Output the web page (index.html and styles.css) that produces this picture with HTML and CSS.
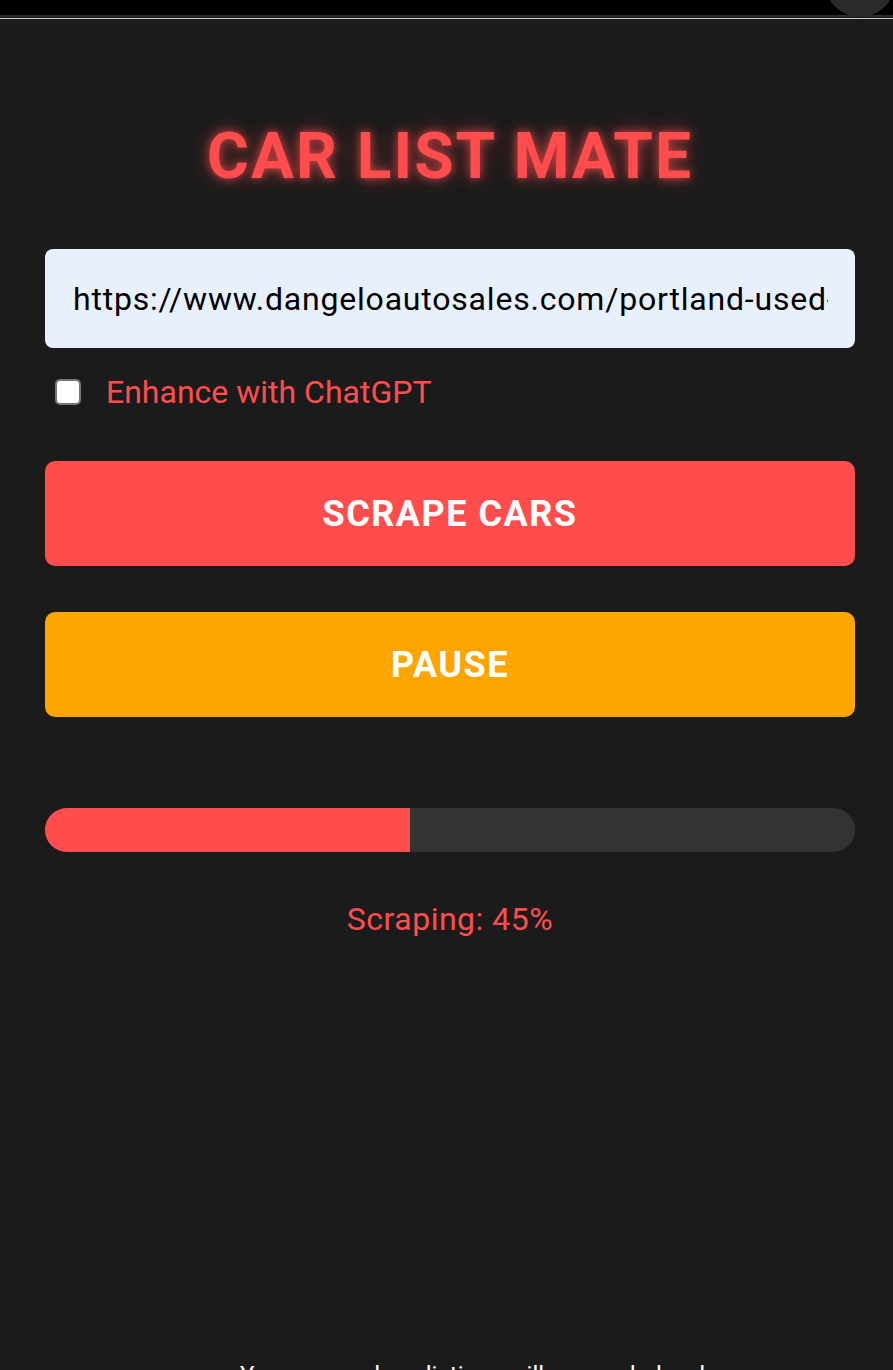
FILE: index.html
```html
<!DOCTYPE html>
<html lang="en">
<head>
<meta charset="utf-8">
<title>Car List Mate</title>
<link rel="stylesheet" href="styles.css">
</head>
<body>
<div class="topbar">
  <div class="topbar-black"></div>
  <div class="topbar-edge"></div>
  <div class="topbar-gap"></div>
  <div class="topbar-line"></div>
  <div class="topbar-orb"></div>
</div>
<main class="app">
  <h1 class="title">CAR LIST MATE</h1>
  <input class="url-input" type="text" value="https://www.dangeloautosales.com/portland-used-cars-for-sale">
  <label class="option">
    <input class="check" type="checkbox">
    <span class="option-label">Enhance with ChatGPT</span>
  </label>
  <button class="btn btn-scrape">SCRAPE CARS</button>
  <button class="btn btn-pause">PAUSE</button>
  <div class="progress">
    <div class="progress-fill" style="width:45%"></div>
  </div>
  <p class="status">Scraping: 45%</p>
  <p class="peek">Your scraped car listings will appear below here</p>
</main>
</body>
</html>
```
FILE: styles.css
```css
* { box-sizing: border-box; }
html, body {
  margin: 0;
  padding: 0;
  background: #1b1b1b;
  height: 1370px;
  overflow: hidden;
}
body {
  font-family: Roboto, "Liberation Sans", sans-serif;
  position: relative;
}
.topbar {
  position: relative;
  overflow: hidden;
  height: 19px;
}
.topbar-black { height: 15px; background: #000; }
.topbar-edge { height: 2px; background: #2b2b2b; }
.topbar-gap { height: 1px; background: #1b1b1b; }
.topbar-line { height: 1px; background: #c8c8c8; }
.topbar-orb {
  position: absolute;
  left: 825px;
  top: -53px;
  width: 70px;
  height: 70px;
  border-radius: 50%;
  background: #2a2a2a;
}
.app {
  display: flex;
  flex-direction: column;
  width: 893px;
  padding: 0 38px 0 45px;
}
.app > * { width: 810px; }
.title {
  margin: 106px 0 0;
  height: 64px;
  font-size: 64px;
  line-height: 64px;
  font-weight: 700;
  letter-spacing: 2px;
  text-align: center;
  color: #ff4d4d;
  text-shadow: 0 0 10px rgba(255, 77, 77, 0.75), 0 0 22px rgba(255, 77, 77, 0.45);
}
.url-input {
  margin-top: 60px;
  height: 99px;
  border: none;
  border-radius: 8px;
  background: #e8f0fe;
  color: #000;
  padding: 0 27px 0 28px;
  font-family: Roboto, "Liberation Sans", sans-serif;
  font-size: 32px;
  letter-spacing: 0.8px;
  outline: none;
}
.option {
  margin-top: 24px;
  height: 40px;
  display: flex;
  align-items: center;
  gap: 25px;
  padding-left: 10px;
}
.check {
  appearance: none;
  -webkit-appearance: none;
  margin: 0;
  width: 26px;
  height: 26px;
  border: 2px solid #767676;
  border-radius: 5px;
  background: #fff;
}
.option-label {
  color: #ff4d4d;
  font-size: 32px;
}
.btn {
  height: 105px;
  border: none;
  border-radius: 10px;
  color: #fff;
  font-family: Roboto, "Liberation Sans", sans-serif;
  font-weight: 700;
  font-size: 36px;
  letter-spacing: 1.5px;
  padding: 0;
}
.btn-scrape {
  margin-top: 49px;
  background: #ff4d4d;
}
.btn-pause {
  margin-top: 46px;
  background: #ffa500;
}
.progress {
  margin-top: 91px;
  height: 44px;
  border-radius: 22px;
  background: #333;
  overflow: hidden;
}
.progress-fill {
  height: 100%;
  background: #ff4d4d;
}
.status {
  margin: 47px 0 0;
  height: 40px;
  line-height: 40px;
  font-size: 32px;
  letter-spacing: 0.5px;
  text-align: center;
  color: #ff4d4d;
}
.peek {
  margin: 419px 0 0 195px;
  width: 515px;
  font-size: 24px;
  line-height: 34px;
  color: #fff;
  white-space: nowrap;
}
```
